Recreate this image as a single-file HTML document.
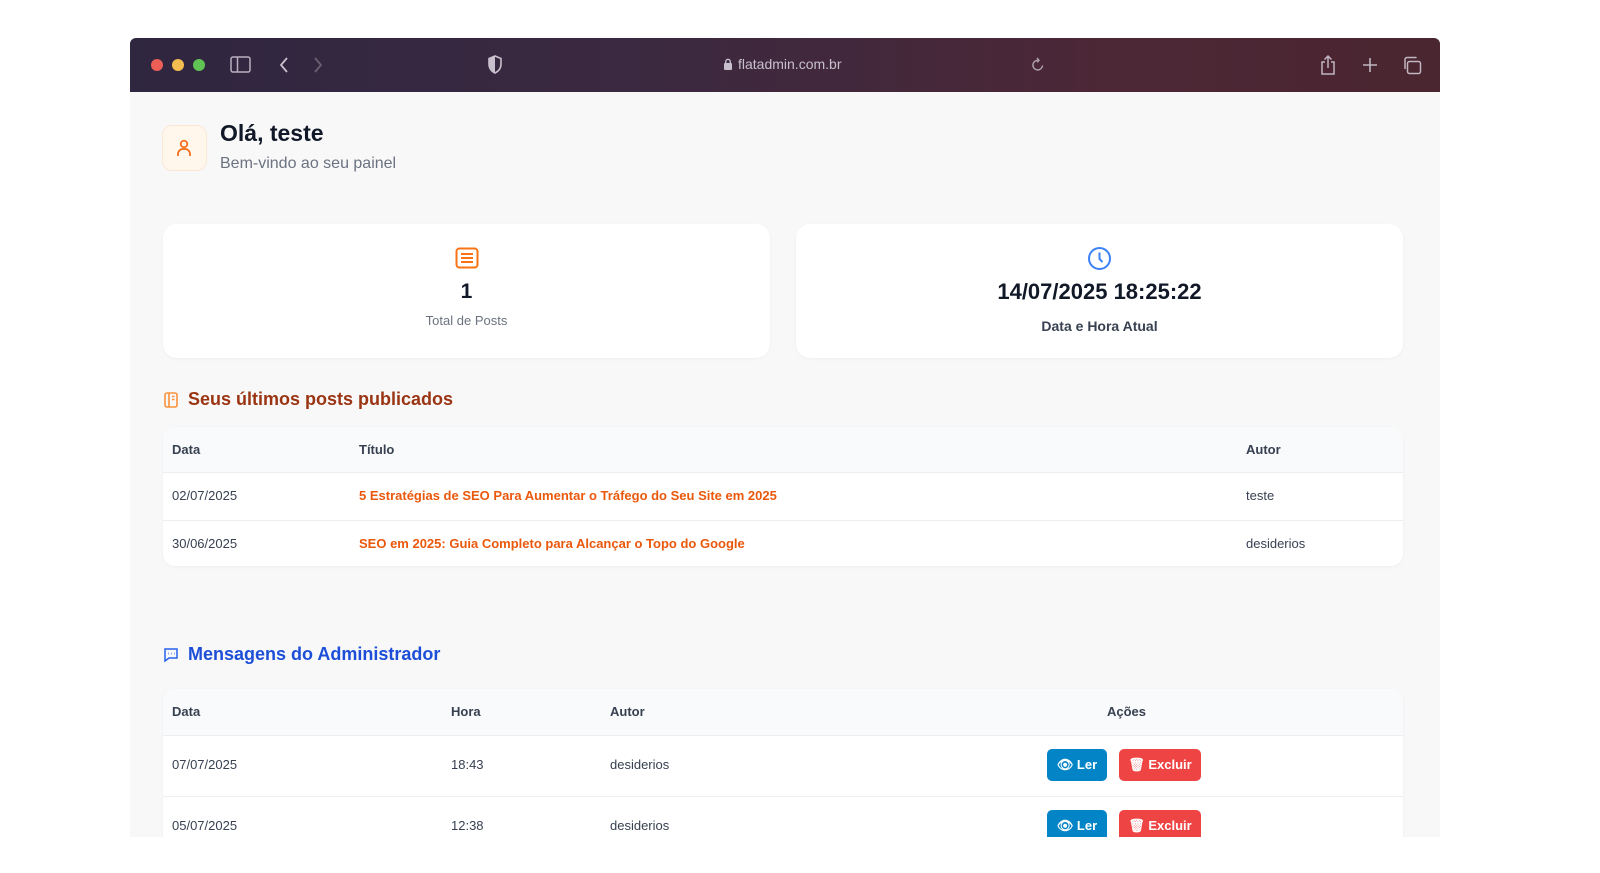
<!DOCTYPE html>
<html><head><meta charset="utf-8"><style>
*{box-sizing:border-box;margin:0;padding:0}
body{width:1600px;height:873px;background:#fff;font-family:"Liberation Sans",sans-serif;position:relative;overflow:hidden}
.win{position:absolute;left:130px;top:38px;width:1310px;height:799px;background:#f8f8f9;overflow:hidden;border-radius:6px 6px 0 0}
.bar{position:absolute;left:0;top:0;width:1310px;height:54px;background:linear-gradient(90deg,#2f2640 0%,#3b2940 40%,#4c2736 75%,#4a2630 100%)}
.dot{position:absolute;top:21px;width:12px;height:12px;border-radius:50%}
.abs{position:absolute}
.card{position:absolute;background:#fff;border-radius:14px;box-shadow:0 1px 3px rgba(0,0,0,.04)}
.t{position:absolute;font-size:13px;color:#374151}
.th{font-weight:bold;color:#374151}
.line{position:absolute;height:1px;background:#eceef1}
.btn{position:absolute;height:32px;border-radius:5px;color:#fff;font-weight:bold;font-size:13px;line-height:32px;text-align:center}
</style></head><body>
<div class="win">
<div class="bar">
 <div class="dot" style="left:21px;background:#ec5f57"></div>
 <div class="dot" style="left:42px;background:#f4bd4f"></div>
 <div class="dot" style="left:63px;background:#5fc453"></div>
 <svg class="abs" style="left:100px;top:18px" width="22" height="18" viewBox="0 0 22 18" fill="none" stroke="#b8b0bf" stroke-width="1.5"><rect x="1" y="1" width="19" height="15" rx="2"/><line x1="7.5" y1="1" x2="7.5" y2="16"/></svg>
 <svg class="abs" style="left:148px;top:18px" width="12" height="18" viewBox="0 0 12 18" fill="none" stroke="#c8c0cc" stroke-width="1.8"><path d="M9 2L3 9l6 7"/></svg>
 <svg class="abs" style="left:182px;top:18px" width="12" height="18" viewBox="0 0 12 18" fill="none" stroke="#6c5f70" stroke-width="1.8"><path d="M3 2l6 7-6 7"/></svg>
 <svg class="abs" style="left:357px;top:17px" width="16" height="20" viewBox="0 0 16 20"><path d="M8 1L2 3.5V9c0 4.5 3 7.5 6 9 3-1.5 6-4.5 6-9V3.5z" fill="none" stroke="#c8c0cc" stroke-width="1.6"/><path d="M8 1L2 3.5V9c0 4.5 3 7.5 6 9z" fill="#c8c0cc"/></svg>
 <svg class="abs" style="left:593px;top:20px" width="10" height="13" viewBox="0 0 10 13"><rect x="1" y="5" width="8" height="7" rx="1" fill="#c8c0cc"/><path d="M2.8 5V3.5a2.2 2.2 0 014.4 0V5" fill="none" stroke="#c8c0cc" stroke-width="1.4"/></svg>
 <div class="abs" style="left:608px;top:18px;font-size:14px;color:#c8c0cc">flatadmin.com.br</div>
 <svg class="abs" style="left:901px;top:19px" width="14" height="15" viewBox="0 0 14 15" fill="none" stroke="#b0a5b0" stroke-width="1.4"><path d="M11.5 8.5A4.8 4.8 0 116.8 3.3"/><path d="M6 1l2 2.3-2 2"/></svg>
 <svg class="abs" style="left:1189px;top:16px" width="18" height="22" viewBox="0 0 18 22" fill="none" stroke="#c0b5c0" stroke-width="1.5"><path d="M6 8H3v12h12V8h-3"/><path d="M9 14V2M5.5 5.5L9 2l3.5 3.5"/></svg>
 <svg class="abs" style="left:1232px;top:19px" width="16" height="16" viewBox="0 0 16 16" stroke="#c0b5c0" stroke-width="1.6"><path d="M8 1v14M1 8h14"/></svg>
 <svg class="abs" style="left:1272px;top:18px" width="20" height="19" viewBox="0 0 20 19" fill="none" stroke="#c0b5c0" stroke-width="1.5"><rect x="5.5" y="5.5" width="13" height="12" rx="2"/><path d="M3 13V3.5A2 2 0 015 1.5h9.5"/></svg>
</div>

<div class="abs" style="left:32px;top:87px;width:45px;height:46px;border-radius:10px;background:#fff6ec;border:1px solid #fbe8d5"></div>
<svg class="abs" style="left:46px;top:101px" width="16" height="18" viewBox="0 0 16 18" fill="none" stroke="#f06a16" stroke-width="1.7"><circle cx="8" cy="5" r="3.3"/><path d="M2 17v-2a5 5 0 015-5h2a5 5 0 015 5v2"/></svg>
<div class="abs" style="left:90px;top:82px;font-size:23px;font-weight:bold;color:#111827">Olá, teste</div>
<div class="abs" style="left:90px;top:117px;font-size:16px;color:#6b7280">Bem-vindo ao seu painel</div>

<div class="card" style="left:33px;top:186px;width:607px;height:134px"></div>
<svg class="abs" style="left:325px;top:209px" width="24" height="22" viewBox="0 0 24 22" fill="none" stroke="#f97316" stroke-width="2"><rect x="1.5" y="1.5" width="21" height="19" rx="3"/><path d="M6 7h12M6 11h12M6 15h12"/></svg>
<div class="abs" style="left:33px;top:242px;width:607px;text-align:center;font-size:21px;font-weight:bold;color:#111827">1</div>
<div class="abs" style="left:33px;top:275px;width:607px;text-align:center;font-size:13px;color:#6b7280">Total de Posts</div>

<div class="card" style="left:666px;top:186px;width:607px;height:134px"></div>
<svg class="abs" style="left:957px;top:208px" width="25" height="25" viewBox="0 0 25 25" fill="none" stroke="#3b82f6" stroke-width="2"><circle cx="12.5" cy="12.5" r="10.5"/><path d="M12.5 6.5v6.5l3 3"/></svg>
<div class="abs" style="left:666px;top:241px;width:607px;text-align:center;font-size:22px;font-weight:bold;color:#111827">14/07/2025 18:25:22</div>
<div class="abs" style="left:666px;top:280px;width:607px;text-align:center;font-size:14px;font-weight:bold;color:#374151">Data e Hora Atual</div>

<svg class="abs" style="left:34px;top:354px" width="14" height="16" viewBox="0 0 14 16" fill="none" stroke="#fb923c" stroke-width="1.6"><rect x="1" y="1" width="12" height="14" rx="2"/><path d="M5 1v14M8 4.5h2.5M8 7.5h2.5"/></svg>
<div class="abs" style="left:58px;top:351px;font-size:18px;font-weight:bold;color:#9a3412">Seus últimos posts publicados</div>

<div class="card" style="left:33px;top:389px;width:1240px;height:139px;border-radius:12px;overflow:hidden"><div style="height:45px;background:#f9fafb"></div></div>
<div class="line" style="left:33px;top:434px;width:1240px"></div>
<div class="line" style="left:33px;top:482px;width:1240px"></div>
<div class="t th" style="left:42px;top:404px">Data</div>
<div class="t th" style="left:229px;top:404px">Título</div>
<div class="t th" style="left:1116px;top:404px">Autor</div>
<div class="t" style="left:42px;top:450px">02/07/2025</div>
<div class="t" style="left:229px;top:450px;color:#ea580c;font-weight:bold">5 Estratégias de SEO Para Aumentar o Tráfego do Seu Site em 2025</div>
<div class="t" style="left:1116px;top:450px">teste</div>
<div class="t" style="left:42px;top:498px">30/06/2025</div>
<div class="t" style="left:229px;top:498px;color:#ea580c;font-weight:bold">SEO em 2025: Guia Completo para Alcançar o Topo do Google</div>
<div class="t" style="left:1116px;top:498px">desiderios</div>

<svg class="abs" style="left:33px;top:609px" width="16" height="16" viewBox="0 0 16 16" fill="none" stroke="#2563eb" stroke-width="1.5"><path d="M2 2h12v9H6l-4 3z"/><path d="M5 6.5h.5M8 6.5h.5M11 6.5h.5" stroke-width="2"/></svg>
<div class="abs" style="left:58px;top:606px;font-size:18px;font-weight:bold;color:#1d4ed8">Mensagens do Administrador</div>

<div class="card" style="left:33px;top:651px;width:1240px;height:170px;border-radius:12px;overflow:hidden"><div style="height:46px;background:#f9fafb"></div></div>
<div class="line" style="left:33px;top:697px;width:1240px"></div>
<div class="line" style="left:33px;top:758px;width:1240px"></div>
<div class="t th" style="left:42px;top:666px">Data</div>
<div class="t th" style="left:321px;top:666px">Hora</div>
<div class="t th" style="left:480px;top:666px">Autor</div>
<div class="t th" style="left:977px;top:666px">Ações</div>
<div class="t" style="left:42px;top:719px">07/07/2025</div>
<div class="t" style="left:321px;top:719px">18:43</div>
<div class="t" style="left:480px;top:719px">desiderios</div>
<div class="btn" style="left:917px;top:711px;width:60px;background:#0284c7">👁 Ler</div>
<div class="btn" style="left:989px;top:711px;width:82px;background:#ef4444">🗑 Excluir</div>
<div class="t" style="left:42px;top:780px">05/07/2025</div>
<div class="t" style="left:321px;top:780px">12:38</div>
<div class="t" style="left:480px;top:780px">desiderios</div>
<div class="btn" style="left:917px;top:772px;width:60px;background:#0284c7">👁 Ler</div>
<div class="btn" style="left:989px;top:772px;width:82px;background:#ef4444">🗑 Excluir</div>
</div>
</body></html>
